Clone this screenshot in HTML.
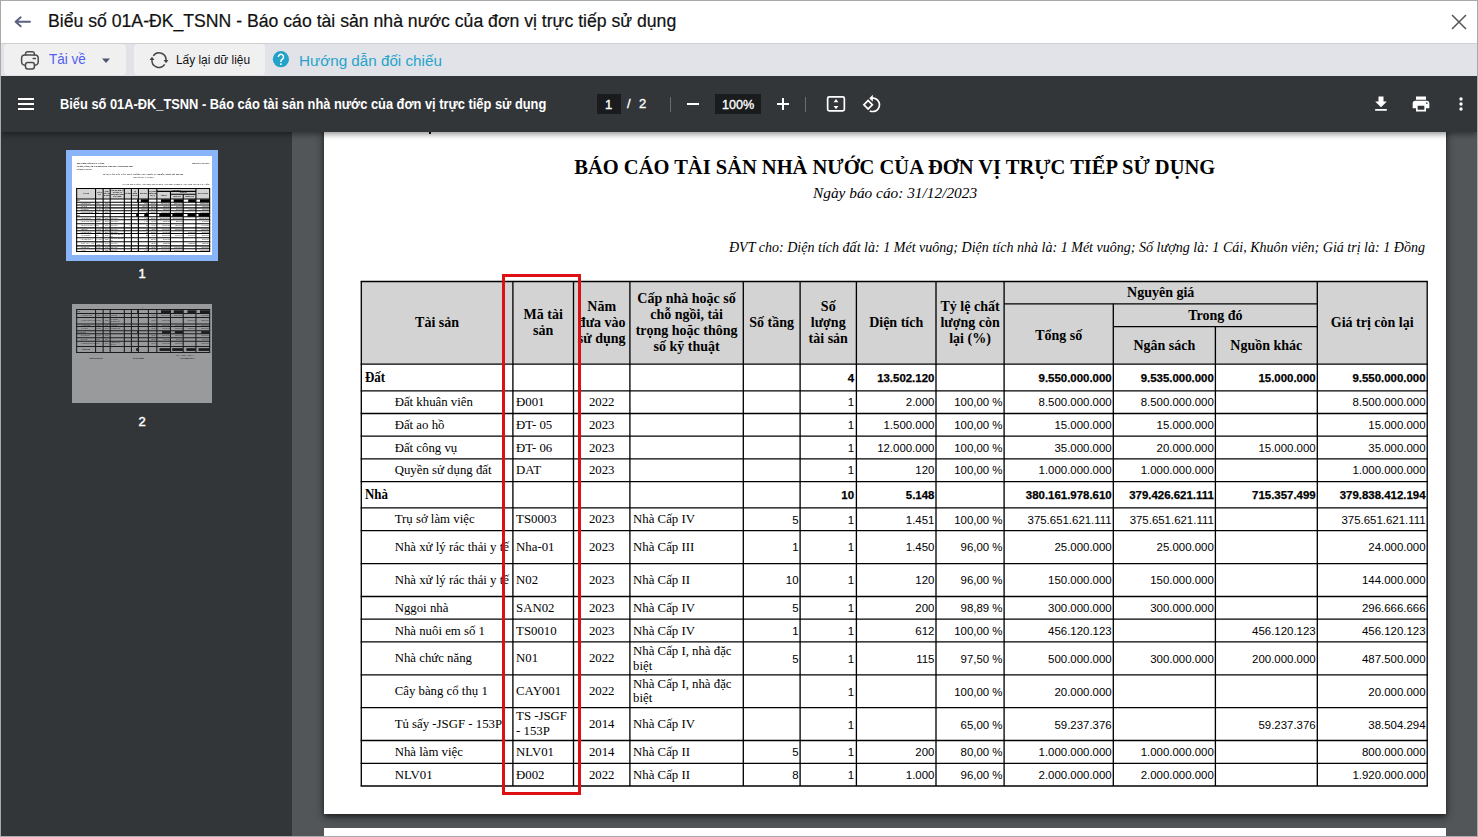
<!DOCTYPE html>
<html lang="vi">
<head>
<meta charset="utf-8">
<title>Biểu số 01A-ĐK_TSNN</title>
<style>
*{box-sizing:border-box;margin:0;padding:0}
html,body{width:1478px;height:837px;overflow:hidden;background:#fff}
body{position:relative;font-family:"Liberation Sans",sans-serif;color:#212121}
.abs{position:absolute}
/* viewer area */
#viewer{position:absolute;left:1px;top:76px;width:1476px;height:760px;background:#525659;overflow:hidden}
#side{position:absolute;left:0;top:76px;width:292px;height:760px;background:#323639}
#pg1{position:absolute;left:324px;top:20px;width:1122px;height:794px;background:#fff;box-shadow:0 2px 5px 0 rgba(0,0,0,.5),0 4px 9px 0 rgba(0,0,0,.3)}
#pg2{position:absolute;left:324px;top:828px;width:1122px;height:40px;background:#fff}
/* cells */
.c{position:absolute;display:flex;align-items:center;overflow:hidden;white-space:nowrap;font-family:"Liberation Serif",serif;font-size:12.8px;line-height:14.9px;color:#000}
.c span{display:block}
.h{justify-content:center;text-align:center;font-weight:bold;font-size:14px;line-height:15.9px;padding-top:0.8px}
.tg{font-weight:bold;padding-left:3.8px;font-size:13.7px;padding-top:1.8px}.tg span{transform:scaleX(.945);transform-origin:0 50%}
.tl{padding-left:33.4px;padding-top:0.6px}
.tm{padding-left:3.2px;padding-top:0.6px}
.tc{justify-content:center;padding-top:0.6px}
.n,.nb{justify-content:flex-end;padding-right:1.6px;font-family:"Liberation Sans",sans-serif;font-size:11.45px;padding-top:0.5px}
.nb{font-weight:bold;padding-top:1.6px;-webkit-text-stroke:.25px #000}
.hbg{position:absolute;background:#d3d3d3}
svg.grid{position:absolute;left:0;top:0;pointer-events:none}
svg.grid{stroke-width:1.33}svg.grid line{stroke:#000}
#red{position:absolute;left:502px;top:274px;width:79px;height:521px;border:3px solid #de1014}
.thumb{position:absolute;width:140px;height:99px;background:#fff;overflow:hidden}
.tp{position:absolute;left:0;top:0;width:1122px;height:794px;transform:scale(0.124777);transform-origin:0 0}
.tp .nb span{background:#000;padding:3px 0 4px 2px}
.tl1{font-size:13px;color:#fff;-webkit-text-stroke:.45px #fff}
/* top chrome */
#frame{position:absolute;left:0;top:0;width:1478px;height:837px;border:1px solid #a9a9a9;pointer-events:none;z-index:50}
#titlebar{position:absolute;left:1px;top:1px;width:1476px;height:42px;background:#fff}
#tb2{position:absolute;left:1px;top:43px;width:1476px;height:33px;background:#e2e3e9;border-top:1px solid #d0d0d3}
.btn{position:absolute;top:44px;height:31px;background:#f0f0f1;border-radius:4px}
#dark{position:absolute;left:1px;top:76px;width:1476px;height:56px;background:#323639;box-shadow:0 2px 6px rgba(0,0,0,.45)}
.t{position:absolute;white-space:nowrap;line-height:1;transform-origin:0 50%}
</style>
</head>
<body>
<div id="viewer"></div>
<div id="pg1"></div>
<div id="pg2"></div>
<div class="abs" style="left:429px;top:131px;width:2px;height:3px;background:#111"></div>

<div class="t" id="doct" style="left:574.300px;top:157.200px;font-family:'Liberation Serif',serif;font-weight:bold;font-size:20.5px;color:#000">BÁO CÁO TÀI SẢN NHÀ NƯỚC CỦA ĐƠN VỊ TRỰC TIẾP SỬ DỤNG</div>
<div class="t" id="docs" style="left:813px;top:185px;font-family:'Liberation Serif',serif;font-style:italic;font-size:15.35px;color:#000">Ngày báo cáo: 31/12/2023</div>
<div class="t" id="docd" style="right:53px;top:240.200px;font-family:'Liberation Serif',serif;font-style:italic;font-size:14.05px;color:#000">ĐVT cho: Diện tích đất là: 1 Mét vuông; Diện tích nhà là: 1 Mét vuông; Số lượng là: 1 Cái, Khuôn viên; Giá trị là: 1 Đồng</div>

<div class="hbg" style="left:361.3px;top:281.5px;width:1065.9px;height:82.7px"></div>
<div class="c h" style="left:361.3px;top:281.5px;width:151.6px;height:82.7px"><span>Tài sản</span></div>
<div class="c h" style="left:512.9px;top:281.5px;width:60.6px;height:82.7px"><span>Mã tài<br>sản</span></div>
<div class="c h" style="left:573.5px;top:281.5px;width:56.4px;height:82.7px"><span>Năm<br>đưa vào<br>sử dụng</span></div>
<div class="c h" style="left:629.9px;top:281.5px;width:113.4px;height:82.7px"><span>Cấp nhà hoặc số<br>chỗ ngồi, tải<br>trọng hoặc thông<br>số kỹ thuật</span></div>
<div class="c h" style="left:743.3px;top:281.5px;width:56.8px;height:82.7px"><span>Số tầng</span></div>
<div class="c h" style="left:800.1px;top:281.5px;width:56.3px;height:82.7px"><span>Số<br>lượng<br>tài sản</span></div>
<div class="c h" style="left:856.4px;top:281.5px;width:79.6px;height:82.7px"><span>Diện tích</span></div>
<div class="c h" style="left:936px;top:281.5px;width:68.1px;height:82.7px"><span>Tỷ lệ chất<br>lượng còn<br>lại (%)</span></div>
<div class="c h" style="left:1004.1px;top:281.5px;width:313.2px;height:22.3px"><span>Nguyên giá</span></div>
<div class="c h" style="left:1004.1px;top:305px;width:109.2px;height:60.4px"><span>Tổng số</span></div>
<div class="c h" style="left:1113.3px;top:303.8px;width:204px;height:22.8px"><span>Trong đó</span></div>
<div class="c h" style="left:1113.3px;top:326.6px;width:102.1px;height:37.6px"><span>Ngân sách</span></div>
<div class="c h" style="left:1215.4px;top:326.6px;width:101.9px;height:37.6px"><span>Nguồn khác</span></div>
<div class="c h" style="left:1317.3px;top:281.5px;width:109.9px;height:82.7px"><span>Giá trị còn lại</span></div>
<div class="c tg" style="left:361.3px;top:364.2px;width:151.6px;height:26.6px"><span>Đất</span></div>
<div class="c nb" style="left:800.1px;top:364.2px;width:55.5px;height:26.6px"><span>4</span></div>
<div class="c nb" style="left:856.4px;top:364.2px;width:79.6px;height:26.6px"><span>13.502.120</span></div>
<div class="c nb" style="left:1004.1px;top:364.2px;width:109.2px;height:26.6px"><span>9.550.000.000</span></div>
<div class="c nb" style="left:1113.3px;top:364.2px;width:102.1px;height:26.6px"><span>9.535.000.000</span></div>
<div class="c nb" style="left:1215.4px;top:364.2px;width:101.9px;height:26.6px"><span>15.000.000</span></div>
<div class="c nb" style="left:1317.3px;top:364.2px;width:109.9px;height:26.6px"><span>9.550.000.000</span></div>
<div class="c tl" style="left:361.3px;top:390.8px;width:151.6px;height:22.7px"><span>Đất khuân viên</span></div>
<div class="c tm" style="left:512.9px;top:390.8px;width:60.6px;height:22.7px"><span>Đ001</span></div>
<div class="c tc" style="left:573.5px;top:390.8px;width:56.4px;height:22.7px"><span>2022</span></div>
<div class="c n" style="left:800.1px;top:390.8px;width:55.5px;height:22.7px"><span>1</span></div>
<div class="c n" style="left:856.4px;top:390.8px;width:79.6px;height:22.7px"><span>2.000</span></div>
<div class="c n" style="left:936px;top:390.8px;width:68.1px;height:22.7px"><span>100,00 %</span></div>
<div class="c n" style="left:1004.1px;top:390.8px;width:109.2px;height:22.7px"><span>8.500.000.000</span></div>
<div class="c n" style="left:1113.3px;top:390.8px;width:102.1px;height:22.7px"><span>8.500.000.000</span></div>
<div class="c n" style="left:1317.3px;top:390.8px;width:109.9px;height:22.7px"><span>8.500.000.000</span></div>
<div class="c tl" style="left:361.3px;top:413.5px;width:151.6px;height:22.7px"><span>Đất ao hồ</span></div>
<div class="c tm" style="left:512.9px;top:413.5px;width:60.6px;height:22.7px"><span>ĐT- 05</span></div>
<div class="c tc" style="left:573.5px;top:413.5px;width:56.4px;height:22.7px"><span>2023</span></div>
<div class="c n" style="left:800.1px;top:413.5px;width:55.5px;height:22.7px"><span>1</span></div>
<div class="c n" style="left:856.4px;top:413.5px;width:79.6px;height:22.7px"><span>1.500.000</span></div>
<div class="c n" style="left:936px;top:413.5px;width:68.1px;height:22.7px"><span>100,00 %</span></div>
<div class="c n" style="left:1004.1px;top:413.5px;width:109.2px;height:22.7px"><span>15.000.000</span></div>
<div class="c n" style="left:1113.3px;top:413.5px;width:102.1px;height:22.7px"><span>15.000.000</span></div>
<div class="c n" style="left:1317.3px;top:413.5px;width:109.9px;height:22.7px"><span>15.000.000</span></div>
<div class="c tl" style="left:361.3px;top:437.2px;width:151.6px;height:22.7px"><span>Đất công vụ</span></div>
<div class="c tm" style="left:512.9px;top:437.2px;width:60.6px;height:22.7px"><span>ĐT- 06</span></div>
<div class="c tc" style="left:573.5px;top:437.2px;width:56.4px;height:22.7px"><span>2023</span></div>
<div class="c n" style="left:800.1px;top:437.2px;width:55.5px;height:22.7px"><span>1</span></div>
<div class="c n" style="left:856.4px;top:437.2px;width:79.6px;height:22.7px"><span>12.000.000</span></div>
<div class="c n" style="left:936px;top:437.2px;width:68.1px;height:22.7px"><span>100,00 %</span></div>
<div class="c n" style="left:1004.1px;top:437.2px;width:109.2px;height:22.7px"><span>35.000.000</span></div>
<div class="c n" style="left:1113.3px;top:437.2px;width:102.1px;height:22.7px"><span>20.000.000</span></div>
<div class="c n" style="left:1215.4px;top:437.2px;width:101.9px;height:22.7px"><span>15.000.000</span></div>
<div class="c n" style="left:1317.3px;top:437.2px;width:109.9px;height:22.7px"><span>35.000.000</span></div>
<div class="c tl" style="left:361.3px;top:458.9px;width:151.6px;height:22.7px"><span>Quyền sử dụng đất</span></div>
<div class="c tm" style="left:512.9px;top:458.9px;width:60.6px;height:22.7px"><span>DAT</span></div>
<div class="c tc" style="left:573.5px;top:458.9px;width:56.4px;height:22.7px"><span>2023</span></div>
<div class="c n" style="left:800.1px;top:458.9px;width:55.5px;height:22.7px"><span>1</span></div>
<div class="c n" style="left:856.4px;top:458.9px;width:79.6px;height:22.7px"><span>120</span></div>
<div class="c n" style="left:936px;top:458.9px;width:68.1px;height:22.7px"><span>100,00 %</span></div>
<div class="c n" style="left:1004.1px;top:458.9px;width:109.2px;height:22.7px"><span>1.000.000.000</span></div>
<div class="c n" style="left:1113.3px;top:458.9px;width:102.1px;height:22.7px"><span>1.000.000.000</span></div>
<div class="c n" style="left:1317.3px;top:458.9px;width:109.9px;height:22.7px"><span>1.000.000.000</span></div>
<div class="c tg" style="left:361.3px;top:481.6px;width:151.6px;height:26.3px"><span>Nhà</span></div>
<div class="c nb" style="left:800.1px;top:481.6px;width:55.5px;height:26.3px"><span>10</span></div>
<div class="c nb" style="left:856.4px;top:481.6px;width:79.6px;height:26.3px"><span>5.148</span></div>
<div class="c nb" style="left:1004.1px;top:481.6px;width:109.2px;height:26.3px"><span>380.161.978.610</span></div>
<div class="c nb" style="left:1113.3px;top:481.6px;width:102.1px;height:26.3px"><span>379.426.621.111</span></div>
<div class="c nb" style="left:1215.4px;top:481.6px;width:101.9px;height:26.3px"><span>715.357.499</span></div>
<div class="c nb" style="left:1317.3px;top:481.6px;width:109.9px;height:26.3px"><span>379.838.412.194</span></div>
<div class="c tl" style="left:361.3px;top:507.9px;width:151.6px;height:22.7px"><span>Trụ sở làm việc</span></div>
<div class="c tm" style="left:512.9px;top:507.9px;width:60.6px;height:22.7px"><span>TS0003</span></div>
<div class="c tc" style="left:573.5px;top:507.9px;width:56.4px;height:22.7px"><span>2023</span></div>
<div class="c tm" style="left:629.9px;top:507.9px;width:113.4px;height:22.7px"><span>Nhà Cấp IV</span></div>
<div class="c n" style="left:743.3px;top:508.9px;width:56.8px;height:22.7px"><span>5</span></div>
<div class="c n" style="left:800.1px;top:508.9px;width:55.5px;height:22.7px"><span>1</span></div>
<div class="c n" style="left:856.4px;top:508.9px;width:79.6px;height:22.7px"><span>1.451</span></div>
<div class="c n" style="left:936px;top:508.9px;width:68.1px;height:22.7px"><span>100,00 %</span></div>
<div class="c n" style="left:1004.1px;top:508.9px;width:109.2px;height:22.7px"><span>375.651.621.111</span></div>
<div class="c n" style="left:1113.3px;top:508.9px;width:102.1px;height:22.7px"><span>375.651.621.111</span></div>
<div class="c n" style="left:1317.3px;top:508.9px;width:109.9px;height:22.7px"><span>375.651.621.111</span></div>
<div class="c tl" style="left:361.3px;top:530.6px;width:151.6px;height:33px"><span>Nhà xử lý rác thải y tế</span></div>
<div class="c tm" style="left:512.9px;top:530.6px;width:60.6px;height:33px"><span>Nha-01</span></div>
<div class="c tc" style="left:573.5px;top:530.6px;width:56.4px;height:33px"><span>2023</span></div>
<div class="c tm" style="left:629.9px;top:530.6px;width:113.4px;height:33px"><span>Nhà Cấp III</span></div>
<div class="c n" style="left:743.3px;top:530.6px;width:56.8px;height:33px"><span>1</span></div>
<div class="c n" style="left:800.1px;top:530.6px;width:55.5px;height:33px"><span>1</span></div>
<div class="c n" style="left:856.4px;top:530.6px;width:79.6px;height:33px"><span>1.450</span></div>
<div class="c n" style="left:936px;top:530.6px;width:68.1px;height:33px"><span>96,00 %</span></div>
<div class="c n" style="left:1004.1px;top:530.6px;width:109.2px;height:33px"><span>25.000.000</span></div>
<div class="c n" style="left:1113.3px;top:530.6px;width:102.1px;height:33px"><span>25.000.000</span></div>
<div class="c n" style="left:1317.3px;top:530.6px;width:109.9px;height:33px"><span>24.000.000</span></div>
<div class="c tl" style="left:361.3px;top:563.6px;width:151.6px;height:32.9px"><span>Nhà xử lý rác thải y tế</span></div>
<div class="c tm" style="left:512.9px;top:563.6px;width:60.6px;height:32.9px"><span>N02</span></div>
<div class="c tc" style="left:573.5px;top:563.6px;width:56.4px;height:32.9px"><span>2023</span></div>
<div class="c tm" style="left:629.9px;top:563.6px;width:113.4px;height:32.9px"><span>Nhà Cấp II</span></div>
<div class="c n" style="left:743.3px;top:563.6px;width:56.8px;height:32.9px"><span>10</span></div>
<div class="c n" style="left:800.1px;top:563.6px;width:55.5px;height:32.9px"><span>1</span></div>
<div class="c n" style="left:856.4px;top:563.6px;width:79.6px;height:32.9px"><span>120</span></div>
<div class="c n" style="left:936px;top:563.6px;width:68.1px;height:32.9px"><span>96,00 %</span></div>
<div class="c n" style="left:1004.1px;top:563.6px;width:109.2px;height:32.9px"><span>150.000.000</span></div>
<div class="c n" style="left:1113.3px;top:563.6px;width:102.1px;height:32.9px"><span>150.000.000</span></div>
<div class="c n" style="left:1317.3px;top:563.6px;width:109.9px;height:32.9px"><span>144.000.000</span></div>
<div class="c tl" style="left:361.3px;top:596.5px;width:151.6px;height:22.6px"><span>Nggoi nhà</span></div>
<div class="c tm" style="left:512.9px;top:596.5px;width:60.6px;height:22.6px"><span>SAN02</span></div>
<div class="c tc" style="left:573.5px;top:596.5px;width:56.4px;height:22.6px"><span>2023</span></div>
<div class="c tm" style="left:629.9px;top:596.5px;width:113.4px;height:22.6px"><span>Nhà Cấp IV</span></div>
<div class="c n" style="left:743.3px;top:596.5px;width:56.8px;height:22.6px"><span>5</span></div>
<div class="c n" style="left:800.1px;top:596.5px;width:55.5px;height:22.6px"><span>1</span></div>
<div class="c n" style="left:856.4px;top:596.5px;width:79.6px;height:22.6px"><span>200</span></div>
<div class="c n" style="left:936px;top:596.5px;width:68.1px;height:22.6px"><span>98,89 %</span></div>
<div class="c n" style="left:1004.1px;top:596.5px;width:109.2px;height:22.6px"><span>300.000.000</span></div>
<div class="c n" style="left:1113.3px;top:596.5px;width:102.1px;height:22.6px"><span>300.000.000</span></div>
<div class="c n" style="left:1317.3px;top:596.5px;width:109.9px;height:22.6px"><span>296.666.666</span></div>
<div class="c tl" style="left:361.3px;top:620.1px;width:151.6px;height:22.7px"><span>Nhà nuôi em số 1</span></div>
<div class="c tm" style="left:512.9px;top:620.1px;width:60.6px;height:22.7px"><span>TS0010</span></div>
<div class="c tc" style="left:573.5px;top:620.1px;width:56.4px;height:22.7px"><span>2023</span></div>
<div class="c tm" style="left:629.9px;top:620.1px;width:113.4px;height:22.7px"><span>Nhà Cấp IV</span></div>
<div class="c n" style="left:743.3px;top:620.1px;width:56.8px;height:22.7px"><span>1</span></div>
<div class="c n" style="left:800.1px;top:620.1px;width:55.5px;height:22.7px"><span>1</span></div>
<div class="c n" style="left:856.4px;top:620.1px;width:79.6px;height:22.7px"><span>612</span></div>
<div class="c n" style="left:936px;top:620.1px;width:68.1px;height:22.7px"><span>100,00 %</span></div>
<div class="c n" style="left:1004.1px;top:620.1px;width:109.2px;height:22.7px"><span>456.120.123</span></div>
<div class="c n" style="left:1215.4px;top:620.1px;width:101.9px;height:22.7px"><span>456.120.123</span></div>
<div class="c n" style="left:1317.3px;top:620.1px;width:109.9px;height:22.7px"><span>456.120.123</span></div>
<div class="c tl" style="left:361.3px;top:641.8px;width:151.6px;height:33px"><span>Nhà chức năng</span></div>
<div class="c tm" style="left:512.9px;top:641.8px;width:60.6px;height:33px"><span>N01</span></div>
<div class="c tc" style="left:573.5px;top:641.8px;width:56.4px;height:33px"><span>2022</span></div>
<div class="c tm" style="left:629.9px;top:641.8px;width:113.4px;height:33px"><span>Nhà Cấp I, nhà đặc<br>biệt</span></div>
<div class="c n" style="left:743.3px;top:642.8px;width:56.8px;height:33px"><span>5</span></div>
<div class="c n" style="left:800.1px;top:642.8px;width:55.5px;height:33px"><span>1</span></div>
<div class="c n" style="left:856.4px;top:642.8px;width:79.6px;height:33px"><span>115</span></div>
<div class="c n" style="left:936px;top:642.8px;width:68.1px;height:33px"><span>97,50 %</span></div>
<div class="c n" style="left:1004.1px;top:642.8px;width:109.2px;height:33px"><span>500.000.000</span></div>
<div class="c n" style="left:1113.3px;top:642.8px;width:102.1px;height:33px"><span>300.000.000</span></div>
<div class="c n" style="left:1215.4px;top:642.8px;width:101.9px;height:33px"><span>200.000.000</span></div>
<div class="c n" style="left:1317.3px;top:642.8px;width:109.9px;height:33px"><span>487.500.000</span></div>
<div class="c tl" style="left:361.3px;top:674.8px;width:151.6px;height:32.8px"><span>Cây bàng cổ thụ 1</span></div>
<div class="c tm" style="left:512.9px;top:674.8px;width:60.6px;height:32.8px"><span>CAY001</span></div>
<div class="c tc" style="left:573.5px;top:674.8px;width:56.4px;height:32.8px"><span>2022</span></div>
<div class="c tm" style="left:629.9px;top:674.8px;width:113.4px;height:32.8px"><span>Nhà Cấp I, nhà đặc<br>biệt</span></div>
<div class="c n" style="left:800.1px;top:675.8px;width:55.5px;height:32.8px"><span>1</span></div>
<div class="c n" style="left:936px;top:675.8px;width:68.1px;height:32.8px"><span>100,00 %</span></div>
<div class="c n" style="left:1004.1px;top:675.8px;width:109.2px;height:32.8px"><span>20.000.000</span></div>
<div class="c n" style="left:1317.3px;top:675.8px;width:109.9px;height:32.8px"><span>20.000.000</span></div>
<div class="c tl" style="left:361.3px;top:707.6px;width:151.6px;height:32.9px"><span>Tủ sấy -JSGF - 153P</span></div>
<div class="c tm" style="left:512.9px;top:707.6px;width:60.6px;height:32.9px"><span>TS -JSGF<br>- 153P</span></div>
<div class="c tc" style="left:573.5px;top:707.6px;width:56.4px;height:32.9px"><span>2014</span></div>
<div class="c tm" style="left:629.9px;top:707.6px;width:113.4px;height:32.9px"><span>Nhà Cấp IV</span></div>
<div class="c n" style="left:800.1px;top:708.6px;width:55.5px;height:32.9px"><span>1</span></div>
<div class="c n" style="left:936px;top:708.6px;width:68.1px;height:32.9px"><span>65,00 %</span></div>
<div class="c n" style="left:1004.1px;top:708.6px;width:109.2px;height:32.9px"><span>59.237.376</span></div>
<div class="c n" style="left:1215.4px;top:708.6px;width:101.9px;height:32.9px"><span>59.237.376</span></div>
<div class="c n" style="left:1317.3px;top:708.6px;width:109.9px;height:32.9px"><span>38.504.294</span></div>
<div class="c tl" style="left:361.3px;top:740.5px;width:151.6px;height:22.8px"><span>Nhà làm việc</span></div>
<div class="c tm" style="left:512.9px;top:740.5px;width:60.6px;height:22.8px"><span>NLV01</span></div>
<div class="c tc" style="left:573.5px;top:740.5px;width:56.4px;height:22.8px"><span>2014</span></div>
<div class="c tm" style="left:629.9px;top:740.5px;width:113.4px;height:22.8px"><span>Nhà Cấp II</span></div>
<div class="c n" style="left:743.3px;top:740.5px;width:56.8px;height:22.8px"><span>5</span></div>
<div class="c n" style="left:800.1px;top:740.5px;width:55.5px;height:22.8px"><span>1</span></div>
<div class="c n" style="left:856.4px;top:740.5px;width:79.6px;height:22.8px"><span>200</span></div>
<div class="c n" style="left:936px;top:740.5px;width:68.1px;height:22.8px"><span>80,00 %</span></div>
<div class="c n" style="left:1004.1px;top:740.5px;width:109.2px;height:22.8px"><span>1.000.000.000</span></div>
<div class="c n" style="left:1113.3px;top:740.5px;width:102.1px;height:22.8px"><span>1.000.000.000</span></div>
<div class="c n" style="left:1317.3px;top:740.5px;width:109.9px;height:22.8px"><span>800.000.000</span></div>
<div class="c tl" style="left:361.3px;top:764.3px;width:151.6px;height:22.7px"><span>NLV01</span></div>
<div class="c tm" style="left:512.9px;top:764.3px;width:60.6px;height:22.7px"><span>Đ002</span></div>
<div class="c tc" style="left:573.5px;top:764.3px;width:56.4px;height:22.7px"><span>2022</span></div>
<div class="c tm" style="left:629.9px;top:764.3px;width:113.4px;height:22.7px"><span>Nhà Cấp II</span></div>
<div class="c n" style="left:743.3px;top:764.3px;width:56.8px;height:22.7px"><span>8</span></div>
<div class="c n" style="left:800.1px;top:764.3px;width:55.5px;height:22.7px"><span>1</span></div>
<div class="c n" style="left:856.4px;top:764.3px;width:79.6px;height:22.7px"><span>1.000</span></div>
<div class="c n" style="left:936px;top:764.3px;width:68.1px;height:22.7px"><span>96,00 %</span></div>
<div class="c n" style="left:1004.1px;top:764.3px;width:109.2px;height:22.7px"><span>2.000.000.000</span></div>
<div class="c n" style="left:1113.3px;top:764.3px;width:102.1px;height:22.7px"><span>2.000.000.000</span></div>
<div class="c n" style="left:1317.3px;top:764.3px;width:109.9px;height:22.7px"><span>1.920.000.000</span></div>
<svg class="grid" width="1478" height="900" viewBox="0 0 1478 900" style="stroke-width:1.33"><line x1="360.63" y1="281.5" x2="1427.87" y2="281.5"/><line x1="1004.1" y1="303.8" x2="1317.3" y2="303.8"/><line x1="1113.3" y1="326.6" x2="1317.3" y2="326.6"/><line x1="360.63" y1="364.2" x2="1427.87" y2="364.2"/><line x1="360.63" y1="390.8" x2="1427.87" y2="390.8"/><line x1="360.63" y1="413.5" x2="1427.87" y2="413.5"/><line x1="360.63" y1="436.2" x2="1427.87" y2="436.2"/><line x1="360.63" y1="458.9" x2="1427.87" y2="458.9"/><line x1="360.63" y1="481.6" x2="1427.87" y2="481.6"/><line x1="360.63" y1="507.9" x2="1427.87" y2="507.9"/><line x1="360.63" y1="530.6" x2="1427.87" y2="530.6"/><line x1="360.63" y1="563.6" x2="1427.87" y2="563.6"/><line x1="360.63" y1="596.5" x2="1427.87" y2="596.5"/><line x1="360.63" y1="619.1" x2="1427.87" y2="619.1"/><line x1="360.63" y1="641.8" x2="1427.87" y2="641.8"/><line x1="360.63" y1="674.8" x2="1427.87" y2="674.8"/><line x1="360.63" y1="707.6" x2="1427.87" y2="707.6"/><line x1="360.63" y1="740.5" x2="1427.87" y2="740.5"/><line x1="360.63" y1="763.3" x2="1427.87" y2="763.3"/><line x1="360.63" y1="786" x2="1427.87" y2="786"/><line x1="361.3" y1="281.5" x2="361.3" y2="786"/><line x1="512.9" y1="281.5" x2="512.9" y2="786"/><line x1="573.5" y1="281.5" x2="573.5" y2="786"/><line x1="629.9" y1="281.5" x2="629.9" y2="786"/><line x1="743.3" y1="281.5" x2="743.3" y2="786"/><line x1="800.1" y1="281.5" x2="800.1" y2="786"/><line x1="856.4" y1="281.5" x2="856.4" y2="786"/><line x1="936" y1="281.5" x2="936" y2="786"/><line x1="1004.1" y1="281.5" x2="1004.1" y2="786"/><line x1="1113.3" y1="303.8" x2="1113.3" y2="786"/><line x1="1215.4" y1="326.6" x2="1215.4" y2="786"/><line x1="1317.3" y1="281.5" x2="1317.3" y2="786"/><line x1="1427.2" y1="281.5" x2="1427.2" y2="786"/></svg>
<div id="red"></div>

<div id="side"></div>
<div class="abs" style="left:66px;top:150px;width:152px;height:111px;background:#8ab4f8"></div><div class="thumb" style="left:72px;top:156px"><div class="tp"><div class="t" style="left:251px;top:136.700px;font-family:'Liberation Serif',serif;font-weight:bold;font-size:20.500px;color:#000">BÁO CÁO TÀI SẢN NHÀ NƯỚC CỦA ĐƠN VỊ TRỰC TIẾP SỬ DỤNG</div><div class="t" style="left:489px;top:164.700px;font-family:'Liberation Serif',serif;font-style:italic;font-size:15.350px;color:#000">Ngày báo cáo: 31/12/2023</div><div class="t" style="right:21px;top:219.700px;font-family:'Liberation Serif',serif;font-style:italic;font-size:14.050px;color:#000">ĐVT cho: Diện tích đất là: 1 Mét vuông; Diện tích nhà là: 1 Mét vuông; Số lượng là: 1 Cái, Khuôn viên; Giá trị là: 1 Đồng</div><div class="t" style="left:38px;top:52px;font-family:'Liberation Serif',serif;font-size:14px;line-height:22px;color:#000;font-weight:bold">Đơn vị quản lý cấp trên: Sở Y tế tỉnh<br>Cơ quan, tổ chức, đơn vị sử dụng tài sản: Trung tâm Y tế huyện Bình Minh<br>Mã đơn vị: 1053498</div><div class="t" style="right:21px;top:52px;font-family:'Liberation Serif',serif;font-size:14px;color:#000;font-weight:bold">Mẫu số 01A-ĐK/TSNN</div>
<div class="hbg" style="left:37.3px;top:261.2px;width:1065.9px;height:82.7px"></div>
<div class="c h" style="left:37.3px;top:261.2px;width:151.6px;height:82.7px"><span>Tài sản</span></div>
<div class="c h" style="left:188.9px;top:261.2px;width:60.6px;height:82.7px"><span>Mã tài<br>sản</span></div>
<div class="c h" style="left:249.5px;top:261.2px;width:56.4px;height:82.7px"><span>Năm<br>đưa vào<br>sử dụng</span></div>
<div class="c h" style="left:305.9px;top:261.2px;width:113.4px;height:82.7px"><span>Cấp nhà hoặc số<br>chỗ ngồi, tải<br>trọng hoặc thông<br>số kỹ thuật</span></div>
<div class="c h" style="left:419.3px;top:261.2px;width:56.8px;height:82.7px"><span>Số tầng</span></div>
<div class="c h" style="left:476.1px;top:261.2px;width:56.3px;height:82.7px"><span>Số<br>lượng<br>tài sản</span></div>
<div class="c h" style="left:532.4px;top:261.2px;width:79.6px;height:82.7px"><span>Diện tích</span></div>
<div class="c h" style="left:612px;top:261.2px;width:68.1px;height:82.7px"><span>Tỷ lệ chất<br>lượng còn<br>lại (%)</span></div>
<div class="c h" style="left:680.1px;top:261.2px;width:313.2px;height:22.3px"><span>Nguyên giá</span></div>
<div class="c h" style="left:680.1px;top:284.7px;width:109.2px;height:60.4px"><span>Tổng số</span></div>
<div class="c h" style="left:789.3px;top:283.5px;width:204px;height:22.8px"><span>Trong đó</span></div>
<div class="c h" style="left:789.3px;top:306.3px;width:102.1px;height:37.6px"><span>Ngân sách</span></div>
<div class="c h" style="left:891.4px;top:306.3px;width:101.9px;height:37.6px"><span>Nguồn khác</span></div>
<div class="c h" style="left:993.3px;top:261.2px;width:109.9px;height:82.7px"><span>Giá trị còn lại</span></div>
<div class="c tg" style="left:37.3px;top:343.9px;width:151.6px;height:26.6px"><span>Đất</span></div>
<div class="c nb" style="left:476.1px;top:343.9px;width:55.5px;height:26.6px"><span>4</span></div>
<div class="c nb" style="left:532.4px;top:343.9px;width:79.6px;height:26.6px"><span>13.502.120</span></div>
<div class="c nb" style="left:680.1px;top:343.9px;width:109.2px;height:26.6px"><span>9.550.000.000</span></div>
<div class="c nb" style="left:789.3px;top:343.9px;width:102.1px;height:26.6px"><span>9.535.000.000</span></div>
<div class="c nb" style="left:891.4px;top:343.9px;width:101.9px;height:26.6px"><span>15.000.000</span></div>
<div class="c nb" style="left:993.3px;top:343.9px;width:109.9px;height:26.6px"><span>9.550.000.000</span></div>
<div class="c tl" style="left:37.3px;top:370.5px;width:151.6px;height:22.7px"><span>Đất khuân viên</span></div>
<div class="c tm" style="left:188.9px;top:370.5px;width:60.6px;height:22.7px"><span>Đ001</span></div>
<div class="c tc" style="left:249.5px;top:370.5px;width:56.4px;height:22.7px"><span>2022</span></div>
<div class="c n" style="left:476.1px;top:370.5px;width:55.5px;height:22.7px"><span>1</span></div>
<div class="c n" style="left:532.4px;top:370.5px;width:79.6px;height:22.7px"><span>2.000</span></div>
<div class="c n" style="left:612px;top:370.5px;width:68.1px;height:22.7px"><span>100,00 %</span></div>
<div class="c n" style="left:680.1px;top:370.5px;width:109.2px;height:22.7px"><span>8.500.000.000</span></div>
<div class="c n" style="left:789.3px;top:370.5px;width:102.1px;height:22.7px"><span>8.500.000.000</span></div>
<div class="c n" style="left:993.3px;top:370.5px;width:109.9px;height:22.7px"><span>8.500.000.000</span></div>
<div class="c tl" style="left:37.3px;top:393.2px;width:151.6px;height:22.7px"><span>Đất ao hồ</span></div>
<div class="c tm" style="left:188.9px;top:393.2px;width:60.6px;height:22.7px"><span>ĐT- 05</span></div>
<div class="c tc" style="left:249.5px;top:393.2px;width:56.4px;height:22.7px"><span>2023</span></div>
<div class="c n" style="left:476.1px;top:393.2px;width:55.5px;height:22.7px"><span>1</span></div>
<div class="c n" style="left:532.4px;top:393.2px;width:79.6px;height:22.7px"><span>1.500.000</span></div>
<div class="c n" style="left:612px;top:393.2px;width:68.1px;height:22.7px"><span>100,00 %</span></div>
<div class="c n" style="left:680.1px;top:393.2px;width:109.2px;height:22.7px"><span>15.000.000</span></div>
<div class="c n" style="left:789.3px;top:393.2px;width:102.1px;height:22.7px"><span>15.000.000</span></div>
<div class="c n" style="left:993.3px;top:393.2px;width:109.9px;height:22.7px"><span>15.000.000</span></div>
<div class="c tl" style="left:37.3px;top:416.9px;width:151.6px;height:22.7px"><span>Đất công vụ</span></div>
<div class="c tm" style="left:188.9px;top:416.9px;width:60.6px;height:22.7px"><span>ĐT- 06</span></div>
<div class="c tc" style="left:249.5px;top:416.9px;width:56.4px;height:22.7px"><span>2023</span></div>
<div class="c n" style="left:476.1px;top:416.9px;width:55.5px;height:22.7px"><span>1</span></div>
<div class="c n" style="left:532.4px;top:416.9px;width:79.6px;height:22.7px"><span>12.000.000</span></div>
<div class="c n" style="left:612px;top:416.9px;width:68.1px;height:22.7px"><span>100,00 %</span></div>
<div class="c n" style="left:680.1px;top:416.9px;width:109.2px;height:22.7px"><span>35.000.000</span></div>
<div class="c n" style="left:789.3px;top:416.9px;width:102.1px;height:22.7px"><span>20.000.000</span></div>
<div class="c n" style="left:891.4px;top:416.9px;width:101.9px;height:22.7px"><span>15.000.000</span></div>
<div class="c n" style="left:993.3px;top:416.9px;width:109.9px;height:22.7px"><span>35.000.000</span></div>
<div class="c tl" style="left:37.3px;top:438.6px;width:151.6px;height:22.7px"><span>Quyền sử dụng đất</span></div>
<div class="c tm" style="left:188.9px;top:438.6px;width:60.6px;height:22.7px"><span>DAT</span></div>
<div class="c tc" style="left:249.5px;top:438.6px;width:56.4px;height:22.7px"><span>2023</span></div>
<div class="c n" style="left:476.1px;top:438.6px;width:55.5px;height:22.7px"><span>1</span></div>
<div class="c n" style="left:532.4px;top:438.6px;width:79.6px;height:22.7px"><span>120</span></div>
<div class="c n" style="left:612px;top:438.6px;width:68.1px;height:22.7px"><span>100,00 %</span></div>
<div class="c n" style="left:680.1px;top:438.6px;width:109.2px;height:22.7px"><span>1.000.000.000</span></div>
<div class="c n" style="left:789.3px;top:438.6px;width:102.1px;height:22.7px"><span>1.000.000.000</span></div>
<div class="c n" style="left:993.3px;top:438.6px;width:109.9px;height:22.7px"><span>1.000.000.000</span></div>
<div class="c tg" style="left:37.3px;top:461.3px;width:151.6px;height:26.3px"><span>Nhà</span></div>
<div class="c nb" style="left:476.1px;top:461.3px;width:55.5px;height:26.3px"><span>10</span></div>
<div class="c nb" style="left:532.4px;top:461.3px;width:79.6px;height:26.3px"><span>5.148</span></div>
<div class="c nb" style="left:680.1px;top:461.3px;width:109.2px;height:26.3px"><span>380.161.978.610</span></div>
<div class="c nb" style="left:789.3px;top:461.3px;width:102.1px;height:26.3px"><span>379.426.621.111</span></div>
<div class="c nb" style="left:891.4px;top:461.3px;width:101.9px;height:26.3px"><span>715.357.499</span></div>
<div class="c nb" style="left:993.3px;top:461.3px;width:109.9px;height:26.3px"><span>379.838.412.194</span></div>
<div class="c tl" style="left:37.3px;top:487.6px;width:151.6px;height:22.7px"><span>Trụ sở làm việc</span></div>
<div class="c tm" style="left:188.9px;top:487.6px;width:60.6px;height:22.7px"><span>TS0003</span></div>
<div class="c tc" style="left:249.5px;top:487.6px;width:56.4px;height:22.7px"><span>2023</span></div>
<div class="c tm" style="left:305.9px;top:487.6px;width:113.4px;height:22.7px"><span>Nhà Cấp IV</span></div>
<div class="c n" style="left:419.3px;top:488.6px;width:56.8px;height:22.7px"><span>5</span></div>
<div class="c n" style="left:476.1px;top:488.6px;width:55.5px;height:22.7px"><span>1</span></div>
<div class="c n" style="left:532.4px;top:488.6px;width:79.6px;height:22.7px"><span>1.451</span></div>
<div class="c n" style="left:612px;top:488.6px;width:68.1px;height:22.7px"><span>100,00 %</span></div>
<div class="c n" style="left:680.1px;top:488.6px;width:109.2px;height:22.7px"><span>375.651.621.111</span></div>
<div class="c n" style="left:789.3px;top:488.6px;width:102.1px;height:22.7px"><span>375.651.621.111</span></div>
<div class="c n" style="left:993.3px;top:488.6px;width:109.9px;height:22.7px"><span>375.651.621.111</span></div>
<div class="c tl" style="left:37.3px;top:510.3px;width:151.6px;height:33px"><span>Nhà xử lý rác thải y tế</span></div>
<div class="c tm" style="left:188.9px;top:510.3px;width:60.6px;height:33px"><span>Nha-01</span></div>
<div class="c tc" style="left:249.5px;top:510.3px;width:56.4px;height:33px"><span>2023</span></div>
<div class="c tm" style="left:305.9px;top:510.3px;width:113.4px;height:33px"><span>Nhà Cấp III</span></div>
<div class="c n" style="left:419.3px;top:510.3px;width:56.8px;height:33px"><span>1</span></div>
<div class="c n" style="left:476.1px;top:510.3px;width:55.5px;height:33px"><span>1</span></div>
<div class="c n" style="left:532.4px;top:510.3px;width:79.6px;height:33px"><span>1.450</span></div>
<div class="c n" style="left:612px;top:510.3px;width:68.1px;height:33px"><span>96,00 %</span></div>
<div class="c n" style="left:680.1px;top:510.3px;width:109.2px;height:33px"><span>25.000.000</span></div>
<div class="c n" style="left:789.3px;top:510.3px;width:102.1px;height:33px"><span>25.000.000</span></div>
<div class="c n" style="left:993.3px;top:510.3px;width:109.9px;height:33px"><span>24.000.000</span></div>
<div class="c tl" style="left:37.3px;top:543.3px;width:151.6px;height:32.9px"><span>Nhà xử lý rác thải y tế</span></div>
<div class="c tm" style="left:188.9px;top:543.3px;width:60.6px;height:32.9px"><span>N02</span></div>
<div class="c tc" style="left:249.5px;top:543.3px;width:56.4px;height:32.9px"><span>2023</span></div>
<div class="c tm" style="left:305.9px;top:543.3px;width:113.4px;height:32.9px"><span>Nhà Cấp II</span></div>
<div class="c n" style="left:419.3px;top:543.3px;width:56.8px;height:32.9px"><span>10</span></div>
<div class="c n" style="left:476.1px;top:543.3px;width:55.5px;height:32.9px"><span>1</span></div>
<div class="c n" style="left:532.4px;top:543.3px;width:79.6px;height:32.9px"><span>120</span></div>
<div class="c n" style="left:612px;top:543.3px;width:68.1px;height:32.9px"><span>96,00 %</span></div>
<div class="c n" style="left:680.1px;top:543.3px;width:109.2px;height:32.9px"><span>150.000.000</span></div>
<div class="c n" style="left:789.3px;top:543.3px;width:102.1px;height:32.9px"><span>150.000.000</span></div>
<div class="c n" style="left:993.3px;top:543.3px;width:109.9px;height:32.9px"><span>144.000.000</span></div>
<div class="c tl" style="left:37.3px;top:576.2px;width:151.6px;height:22.6px"><span>Nggoi nhà</span></div>
<div class="c tm" style="left:188.9px;top:576.2px;width:60.6px;height:22.6px"><span>SAN02</span></div>
<div class="c tc" style="left:249.5px;top:576.2px;width:56.4px;height:22.6px"><span>2023</span></div>
<div class="c tm" style="left:305.9px;top:576.2px;width:113.4px;height:22.6px"><span>Nhà Cấp IV</span></div>
<div class="c n" style="left:419.3px;top:576.2px;width:56.8px;height:22.6px"><span>5</span></div>
<div class="c n" style="left:476.1px;top:576.2px;width:55.5px;height:22.6px"><span>1</span></div>
<div class="c n" style="left:532.4px;top:576.2px;width:79.6px;height:22.6px"><span>200</span></div>
<div class="c n" style="left:612px;top:576.2px;width:68.1px;height:22.6px"><span>98,89 %</span></div>
<div class="c n" style="left:680.1px;top:576.2px;width:109.2px;height:22.6px"><span>300.000.000</span></div>
<div class="c n" style="left:789.3px;top:576.2px;width:102.1px;height:22.6px"><span>300.000.000</span></div>
<div class="c n" style="left:993.3px;top:576.2px;width:109.9px;height:22.6px"><span>296.666.666</span></div>
<div class="c tl" style="left:37.3px;top:599.8px;width:151.6px;height:22.7px"><span>Nhà nuôi em số 1</span></div>
<div class="c tm" style="left:188.9px;top:599.8px;width:60.6px;height:22.7px"><span>TS0010</span></div>
<div class="c tc" style="left:249.5px;top:599.8px;width:56.4px;height:22.7px"><span>2023</span></div>
<div class="c tm" style="left:305.9px;top:599.8px;width:113.4px;height:22.7px"><span>Nhà Cấp IV</span></div>
<div class="c n" style="left:419.3px;top:599.8px;width:56.8px;height:22.7px"><span>1</span></div>
<div class="c n" style="left:476.1px;top:599.8px;width:55.5px;height:22.7px"><span>1</span></div>
<div class="c n" style="left:532.4px;top:599.8px;width:79.6px;height:22.7px"><span>612</span></div>
<div class="c n" style="left:612px;top:599.8px;width:68.1px;height:22.7px"><span>100,00 %</span></div>
<div class="c n" style="left:680.1px;top:599.8px;width:109.2px;height:22.7px"><span>456.120.123</span></div>
<div class="c n" style="left:891.4px;top:599.8px;width:101.9px;height:22.7px"><span>456.120.123</span></div>
<div class="c n" style="left:993.3px;top:599.8px;width:109.9px;height:22.7px"><span>456.120.123</span></div>
<div class="c tl" style="left:37.3px;top:621.5px;width:151.6px;height:33px"><span>Nhà chức năng</span></div>
<div class="c tm" style="left:188.9px;top:621.5px;width:60.6px;height:33px"><span>N01</span></div>
<div class="c tc" style="left:249.5px;top:621.5px;width:56.4px;height:33px"><span>2022</span></div>
<div class="c tm" style="left:305.9px;top:621.5px;width:113.4px;height:33px"><span>Nhà Cấp I, nhà đặc<br>biệt</span></div>
<div class="c n" style="left:419.3px;top:622.5px;width:56.8px;height:33px"><span>5</span></div>
<div class="c n" style="left:476.1px;top:622.5px;width:55.5px;height:33px"><span>1</span></div>
<div class="c n" style="left:532.4px;top:622.5px;width:79.6px;height:33px"><span>115</span></div>
<div class="c n" style="left:612px;top:622.5px;width:68.1px;height:33px"><span>97,50 %</span></div>
<div class="c n" style="left:680.1px;top:622.5px;width:109.2px;height:33px"><span>500.000.000</span></div>
<div class="c n" style="left:789.3px;top:622.5px;width:102.1px;height:33px"><span>300.000.000</span></div>
<div class="c n" style="left:891.4px;top:622.5px;width:101.9px;height:33px"><span>200.000.000</span></div>
<div class="c n" style="left:993.3px;top:622.5px;width:109.9px;height:33px"><span>487.500.000</span></div>
<div class="c tl" style="left:37.3px;top:654.5px;width:151.6px;height:32.8px"><span>Cây bàng cổ thụ 1</span></div>
<div class="c tm" style="left:188.9px;top:654.5px;width:60.6px;height:32.8px"><span>CAY001</span></div>
<div class="c tc" style="left:249.5px;top:654.5px;width:56.4px;height:32.8px"><span>2022</span></div>
<div class="c tm" style="left:305.9px;top:654.5px;width:113.4px;height:32.8px"><span>Nhà Cấp I, nhà đặc<br>biệt</span></div>
<div class="c n" style="left:476.1px;top:655.5px;width:55.5px;height:32.8px"><span>1</span></div>
<div class="c n" style="left:612px;top:655.5px;width:68.1px;height:32.8px"><span>100,00 %</span></div>
<div class="c n" style="left:680.1px;top:655.5px;width:109.2px;height:32.8px"><span>20.000.000</span></div>
<div class="c n" style="left:993.3px;top:655.5px;width:109.9px;height:32.8px"><span>20.000.000</span></div>
<div class="c tl" style="left:37.3px;top:687.3px;width:151.6px;height:32.9px"><span>Tủ sấy -JSGF - 153P</span></div>
<div class="c tm" style="left:188.9px;top:687.3px;width:60.6px;height:32.9px"><span>TS -JSGF<br>- 153P</span></div>
<div class="c tc" style="left:249.5px;top:687.3px;width:56.4px;height:32.9px"><span>2014</span></div>
<div class="c tm" style="left:305.9px;top:687.3px;width:113.4px;height:32.9px"><span>Nhà Cấp IV</span></div>
<div class="c n" style="left:476.1px;top:688.3px;width:55.5px;height:32.9px"><span>1</span></div>
<div class="c n" style="left:612px;top:688.3px;width:68.1px;height:32.9px"><span>65,00 %</span></div>
<div class="c n" style="left:680.1px;top:688.3px;width:109.2px;height:32.9px"><span>59.237.376</span></div>
<div class="c n" style="left:891.4px;top:688.3px;width:101.9px;height:32.9px"><span>59.237.376</span></div>
<div class="c n" style="left:993.3px;top:688.3px;width:109.9px;height:32.9px"><span>38.504.294</span></div>
<div class="c tl" style="left:37.3px;top:720.2px;width:151.6px;height:22.8px"><span>Nhà làm việc</span></div>
<div class="c tm" style="left:188.9px;top:720.2px;width:60.6px;height:22.8px"><span>NLV01</span></div>
<div class="c tc" style="left:249.5px;top:720.2px;width:56.4px;height:22.8px"><span>2014</span></div>
<div class="c tm" style="left:305.9px;top:720.2px;width:113.4px;height:22.8px"><span>Nhà Cấp II</span></div>
<div class="c n" style="left:419.3px;top:720.2px;width:56.8px;height:22.8px"><span>5</span></div>
<div class="c n" style="left:476.1px;top:720.2px;width:55.5px;height:22.8px"><span>1</span></div>
<div class="c n" style="left:532.4px;top:720.2px;width:79.6px;height:22.8px"><span>200</span></div>
<div class="c n" style="left:612px;top:720.2px;width:68.1px;height:22.8px"><span>80,00 %</span></div>
<div class="c n" style="left:680.1px;top:720.2px;width:109.2px;height:22.8px"><span>1.000.000.000</span></div>
<div class="c n" style="left:789.3px;top:720.2px;width:102.1px;height:22.8px"><span>1.000.000.000</span></div>
<div class="c n" style="left:993.3px;top:720.2px;width:109.9px;height:22.8px"><span>800.000.000</span></div>
<div class="c tl" style="left:37.3px;top:744px;width:151.6px;height:22.7px"><span>NLV01</span></div>
<div class="c tm" style="left:188.9px;top:744px;width:60.6px;height:22.7px"><span>Đ002</span></div>
<div class="c tc" style="left:249.5px;top:744px;width:56.4px;height:22.7px"><span>2022</span></div>
<div class="c tm" style="left:305.9px;top:744px;width:113.4px;height:22.7px"><span>Nhà Cấp II</span></div>
<div class="c n" style="left:419.3px;top:744px;width:56.8px;height:22.7px"><span>8</span></div>
<div class="c n" style="left:476.1px;top:744px;width:55.5px;height:22.7px"><span>1</span></div>
<div class="c n" style="left:532.4px;top:744px;width:79.6px;height:22.7px"><span>1.000</span></div>
<div class="c n" style="left:612px;top:744px;width:68.1px;height:22.7px"><span>96,00 %</span></div>
<div class="c n" style="left:680.1px;top:744px;width:109.2px;height:22.7px"><span>2.000.000.000</span></div>
<div class="c n" style="left:789.3px;top:744px;width:102.1px;height:22.7px"><span>2.000.000.000</span></div>
<div class="c n" style="left:993.3px;top:744px;width:109.9px;height:22.7px"><span>1.920.000.000</span></div>
<svg class="grid" width="1478" height="900" viewBox="0 0 1478 900" style="stroke-width:8.5"><line x1="33.05" y1="261.2" x2="1107.45" y2="261.2"/><line x1="680.1" y1="283.5" x2="993.3" y2="283.5"/><line x1="789.3" y1="306.3" x2="993.3" y2="306.3"/><line x1="33.05" y1="343.9" x2="1107.45" y2="343.9"/><line x1="33.05" y1="370.5" x2="1107.45" y2="370.5"/><line x1="33.05" y1="393.2" x2="1107.45" y2="393.2"/><line x1="33.05" y1="415.9" x2="1107.45" y2="415.9"/><line x1="33.05" y1="438.6" x2="1107.45" y2="438.6"/><line x1="33.05" y1="461.3" x2="1107.45" y2="461.3"/><line x1="33.05" y1="487.6" x2="1107.45" y2="487.6"/><line x1="33.05" y1="510.3" x2="1107.45" y2="510.3"/><line x1="33.05" y1="543.3" x2="1107.45" y2="543.3"/><line x1="33.05" y1="576.2" x2="1107.45" y2="576.2"/><line x1="33.05" y1="598.8" x2="1107.45" y2="598.8"/><line x1="33.05" y1="621.5" x2="1107.45" y2="621.5"/><line x1="33.05" y1="654.5" x2="1107.45" y2="654.5"/><line x1="33.05" y1="687.3" x2="1107.45" y2="687.3"/><line x1="33.05" y1="720.2" x2="1107.45" y2="720.2"/><line x1="33.05" y1="743" x2="1107.45" y2="743"/><line x1="33.05" y1="765.7" x2="1107.45" y2="765.7"/><line x1="37.3" y1="261.2" x2="37.3" y2="765.7"/><line x1="188.9" y1="261.2" x2="188.9" y2="765.7"/><line x1="249.5" y1="261.2" x2="249.5" y2="765.7"/><line x1="305.9" y1="261.2" x2="305.9" y2="765.7"/><line x1="419.3" y1="261.2" x2="419.3" y2="765.7"/><line x1="476.1" y1="261.2" x2="476.1" y2="765.7"/><line x1="532.4" y1="261.2" x2="532.4" y2="765.7"/><line x1="612" y1="261.2" x2="612" y2="765.7"/><line x1="680.1" y1="261.2" x2="680.1" y2="765.7"/><line x1="789.3" y1="283.5" x2="789.3" y2="765.7"/><line x1="891.4" y1="306.3" x2="891.4" y2="765.7"/><line x1="993.3" y1="261.2" x2="993.3" y2="765.7"/><line x1="1103.2" y1="261.2" x2="1103.2" y2="765.7"/></svg></div></div><div class="t tl1" style="left:138px;top:267px;width:8px;text-align:center">1</div><div class="thumb" style="left:72px;top:304px;opacity:.5"><div class="tp"><div class="c tg" style="left:37.3px;top:44.4px;width:151.6px;height:31.9px"><span>Ô tô</span></div>
<div class="c nb" style="left:476.1px;top:44.4px;width:55.5px;height:31.9px"><span>3</span></div>
<div class="c nb" style="left:680.1px;top:44.4px;width:109.2px;height:31.9px"><span>2.315.000.000</span></div>
<div class="c nb" style="left:789.3px;top:44.4px;width:102.1px;height:31.9px"><span>1.500.000.000</span></div>
<div class="c nb" style="left:891.4px;top:44.4px;width:101.9px;height:31.9px"><span>815.000.000</span></div>
<div class="c nb" style="left:993.3px;top:44.4px;width:109.9px;height:31.9px"><span>1.120.500.000</span></div>
<div class="c tl" style="left:37.3px;top:76.3px;width:151.6px;height:32px"><span>Xe Toyota Camry</span></div>
<div class="c tm" style="left:188.9px;top:76.3px;width:60.6px;height:32px"><span>OTO01</span></div>
<div class="c tc" style="left:249.5px;top:76.3px;width:56.4px;height:32px"><span>2019</span></div>
<div class="c tm" style="left:305.9px;top:76.3px;width:113.4px;height:32px"><span>5 chỗ ngồi</span></div>
<div class="c n" style="left:476.1px;top:76.3px;width:55.5px;height:32px"><span>1</span></div>
<div class="c n" style="left:612px;top:76.3px;width:68.1px;height:32px"><span>75,00 %</span></div>
<div class="c n" style="left:680.1px;top:76.3px;width:109.2px;height:32px"><span>1.200.000.000</span></div>
<div class="c n" style="left:789.3px;top:76.3px;width:102.1px;height:32px"><span>1.200.000.000</span></div>
<div class="c n" style="left:993.3px;top:76.3px;width:109.9px;height:32px"><span>650.000.000</span></div>
<div class="c tl" style="left:37.3px;top:108.3px;width:151.6px;height:51.3px"><span>Xe Ford Transit 16 chỗ</span></div>
<div class="c tm" style="left:188.9px;top:108.3px;width:60.6px;height:51.3px"><span>OTO02</span></div>
<div class="c tc" style="left:249.5px;top:108.3px;width:56.4px;height:51.3px"><span>2020</span></div>
<div class="c tm" style="left:305.9px;top:108.3px;width:113.4px;height:51.3px"><span>16 chỗ ngồi,<br>tải trọng 1 tấn</span></div>
<div class="c n" style="left:476.1px;top:108.3px;width:55.5px;height:51.3px"><span>1</span></div>
<div class="c n" style="left:612px;top:108.3px;width:68.1px;height:51.3px"><span>80,00 %</span></div>
<div class="c n" style="left:680.1px;top:108.3px;width:109.2px;height:51.3px"><span>815.000.000</span></div>
<div class="c n" style="left:891.4px;top:108.3px;width:101.9px;height:51.3px"><span>815.000.000</span></div>
<div class="c n" style="left:993.3px;top:108.3px;width:109.9px;height:51.3px"><span>320.500.000</span></div>
<div class="c tl" style="left:37.3px;top:159.6px;width:151.6px;height:20.9px"><span>Xe cứu thương</span></div>
<div class="c tm" style="left:188.9px;top:159.6px;width:60.6px;height:20.9px"><span>OTO03</span></div>
<div class="c tc" style="left:249.5px;top:159.6px;width:56.4px;height:20.9px"><span>2021</span></div>
<div class="c tm" style="left:305.9px;top:159.6px;width:113.4px;height:20.9px"><span>7 chỗ ngồi</span></div>
<div class="c n" style="left:476.1px;top:159.6px;width:55.5px;height:20.9px"><span>1</span></div>
<div class="c n" style="left:612px;top:159.6px;width:68.1px;height:20.9px"><span>90,00 %</span></div>
<div class="c n" style="left:680.1px;top:159.6px;width:109.2px;height:20.9px"><span>300.000.000</span></div>
<div class="c n" style="left:789.3px;top:159.6px;width:102.1px;height:20.9px"><span>300.000.000</span></div>
<div class="c n" style="left:993.3px;top:159.6px;width:109.9px;height:20.9px"><span>150.000.000</span></div>
<div class="c tl" style="left:37.3px;top:180.5px;width:151.6px;height:34.5px"><span>Xe tải nhỏ</span></div>
<div class="c tm" style="left:188.9px;top:180.5px;width:60.6px;height:34.5px"><span>OTO04</span></div>
<div class="c tc" style="left:249.5px;top:180.5px;width:56.4px;height:34.5px"><span>2018</span></div>
<div class="c tm" style="left:305.9px;top:180.5px;width:113.4px;height:34.5px"><span>Tải trọng 2 tấn</span></div>
<div class="c n" style="left:476.1px;top:180.5px;width:55.5px;height:34.5px"><span>1</span></div>
<div class="c n" style="left:612px;top:180.5px;width:68.1px;height:34.5px"><span>60,00 %</span></div>
<div class="c n" style="left:680.1px;top:180.5px;width:109.2px;height:34.5px"><span>450.000.000</span></div>
<div class="c n" style="left:789.3px;top:180.5px;width:102.1px;height:34.5px"><span>300.000.000</span></div>
<div class="c n" style="left:891.4px;top:180.5px;width:101.9px;height:34.5px"><span>150.000.000</span></div>
<div class="c n" style="left:993.3px;top:180.5px;width:109.9px;height:34.5px"><span>250.000.000</span></div>
<div class="c tg" style="left:37.3px;top:215px;width:151.6px;height:23.7px"><span>Tài sản khác</span></div>
<div class="c nb" style="left:476.1px;top:215px;width:55.5px;height:23.7px"><span>4</span></div>
<div class="c nb" style="left:680.1px;top:215px;width:109.2px;height:23.7px"><span>986.500.000</span></div>
<div class="c nb" style="left:789.3px;top:215px;width:102.1px;height:23.7px"><span>986.500.000</span></div>
<div class="c nb" style="left:993.3px;top:215px;width:109.9px;height:23.7px"><span>612.300.000</span></div>
<div class="c tl" style="left:37.3px;top:238.7px;width:151.6px;height:32px"><span>Máy phát điện</span></div>
<div class="c tm" style="left:188.9px;top:238.7px;width:60.6px;height:32px"><span>MPD01</span></div>
<div class="c tc" style="left:249.5px;top:238.7px;width:56.4px;height:32px"><span>2020</span></div>
<div class="c n" style="left:476.1px;top:238.7px;width:55.5px;height:32px"><span>1</span></div>
<div class="c n" style="left:612px;top:238.7px;width:68.1px;height:32px"><span>70,00 %</span></div>
<div class="c n" style="left:680.1px;top:238.7px;width:109.2px;height:32px"><span>350.000.000</span></div>
<div class="c n" style="left:789.3px;top:238.7px;width:102.1px;height:32px"><span>350.000.000</span></div>
<div class="c n" style="left:993.3px;top:238.7px;width:109.9px;height:32px"><span>245.000.000</span></div>
<div class="c tl" style="left:37.3px;top:270.7px;width:151.6px;height:27.7px"><span>Máy chiếu</span></div>
<div class="c tm" style="left:188.9px;top:270.7px;width:60.6px;height:27.7px"><span>MC02</span></div>
<div class="c tc" style="left:249.5px;top:270.7px;width:56.4px;height:27.7px"><span>2021</span></div>
<div class="c n" style="left:476.1px;top:270.7px;width:55.5px;height:27.7px"><span>1</span></div>
<div class="c n" style="left:612px;top:270.7px;width:68.1px;height:27.7px"><span>85,00 %</span></div>
<div class="c n" style="left:680.1px;top:270.7px;width:109.2px;height:27.7px"><span>36.500.000</span></div>
<div class="c n" style="left:789.3px;top:270.7px;width:102.1px;height:27.7px"><span>36.500.000</span></div>
<div class="c n" style="left:993.3px;top:270.7px;width:109.9px;height:27.7px"><span>31.000.000</span></div>
<div class="c tl" style="left:37.3px;top:298.4px;width:151.6px;height:41.6px"><span>Hệ thống điều hòa trung tâm</span></div>
<div class="c tm" style="left:188.9px;top:298.4px;width:60.6px;height:41.6px"><span>DH01</span></div>
<div class="c tc" style="left:249.5px;top:298.4px;width:56.4px;height:41.6px"><span>2019</span></div>
<div class="c tm" style="left:305.9px;top:298.4px;width:113.4px;height:41.6px"><span>Công suất lớn,<br>đặc biệt</span></div>
<div class="c n" style="left:476.1px;top:298.4px;width:55.5px;height:41.6px"><span>1</span></div>
<div class="c n" style="left:612px;top:298.4px;width:68.1px;height:41.6px"><span>56,00 %</span></div>
<div class="c n" style="left:680.1px;top:298.4px;width:109.2px;height:41.6px"><span>600.000.000</span></div>
<div class="c n" style="left:789.3px;top:298.4px;width:102.1px;height:41.6px"><span>600.000.000</span></div>
<div class="c n" style="left:993.3px;top:298.4px;width:109.9px;height:41.6px"><span>336.300.000</span></div>
<div class="c h" style="left:37.3px;top:340px;width:151.6px;height:48.7px"><span>Tổng cộng</span></div>
<div class="c nb" style="left:476.1px;top:340px;width:55.5px;height:48.7px"><span>21</span></div>
<div class="c nb" style="left:680.1px;top:340px;width:109.2px;height:48.7px"><span>393.013.478.610</span></div>
<div class="c nb" style="left:789.3px;top:340px;width:102.1px;height:48.7px"><span>391.448.121.111</span></div>
<div class="c nb" style="left:891.4px;top:340px;width:101.9px;height:48.7px"><span>1.545.357.499</span></div>
<div class="c nb" style="left:993.3px;top:340px;width:109.9px;height:48.7px"><span>391.121.212.194</span></div>
<svg class="grid" width="1478" height="900" viewBox="0 0 1478 900" style="stroke-width:8.5"><line x1="33.05" y1="44.4" x2="1107.45" y2="44.4"/><line x1="33.05" y1="76.3" x2="1107.45" y2="76.3"/><line x1="33.05" y1="108.3" x2="1107.45" y2="108.3"/><line x1="33.05" y1="159.6" x2="1107.45" y2="159.6"/><line x1="33.05" y1="180.5" x2="1107.45" y2="180.5"/><line x1="33.05" y1="215" x2="1107.45" y2="215"/><line x1="33.05" y1="238.7" x2="1107.45" y2="238.7"/><line x1="33.05" y1="270.7" x2="1107.45" y2="270.7"/><line x1="33.05" y1="298.4" x2="1107.45" y2="298.4"/><line x1="33.05" y1="340" x2="1107.45" y2="340"/><line x1="33.05" y1="388.7" x2="1107.45" y2="388.7"/><line x1="37.3" y1="44.4" x2="37.3" y2="388.7"/><line x1="188.9" y1="44.4" x2="188.9" y2="388.7"/><line x1="249.5" y1="44.4" x2="249.5" y2="388.7"/><line x1="305.9" y1="44.4" x2="305.9" y2="388.7"/><line x1="419.3" y1="44.4" x2="419.3" y2="388.7"/><line x1="476.1" y1="44.4" x2="476.1" y2="388.7"/><line x1="532.4" y1="44.4" x2="532.4" y2="388.7"/><line x1="612" y1="44.4" x2="612" y2="388.7"/><line x1="680.1" y1="44.4" x2="680.1" y2="388.7"/><line x1="789.3" y1="44.4" x2="789.3" y2="388.7"/><line x1="891.4" y1="44.4" x2="891.4" y2="388.7"/><line x1="993.3" y1="44.4" x2="993.3" y2="388.7"/><line x1="1103.2" y1="44.4" x2="1103.2" y2="388.7"/></svg>
<div class="t" style="left:830px;top:402px;font-family:'Liberation Serif',serif;font-style:italic;font-size:13px;color:#000">Ngày ..... tháng ..... năm .......</div><div class="t" style="left:138px;top:430px;font-family:'Liberation Serif',serif;font-weight:bold;font-size:14px;color:#000">Người lập báo cáo</div><div class="t" style="left:486px;top:430px;font-family:'Liberation Serif',serif;font-weight:bold;font-size:14px;color:#000">Kế toán trưởng</div><div class="t" style="left:868px;top:430px;font-family:'Liberation Serif',serif;font-weight:bold;font-size:14px;color:#000">Thủ trưởng đơn vị</div><div class="t" style="left:560px;top:22px;font-family:'Liberation Serif',serif;font-size:12px;color:#000">2</div></div></div><div class="t tl1" style="left:138px;top:415px;width:8px;text-align:center">2</div>

<div id="dark"></div>
<!-- dark toolbar content -->
<svg class="abs" style="left:18px;top:98px" width="16" height="12" viewBox="0 0 16 12"><path d="M0 1h16M0 6h16M0 11h16" stroke="#fff" stroke-width="2"/></svg>
<div class="t" id="dtitle" style="left:60px;top:97px;font-size:14px;font-weight:bold;color:#fff;transform:scaleX(.917)">Biểu số 01A-ĐK_TSNN - Báo cáo tài sản nhà nước của đơn vị trực tiếp sử dụng</div>
<div class="abs" style="left:597px;top:94px;width:24px;height:20px;background:#191b1c"></div>
<div class="t" id="pgn" style="left:605px;top:98px;font-size:13px;color:#fff;-webkit-text-stroke:.35px #fff">1</div>
<div class="t" style="left:627px;top:96.800px;font-size:13px;color:#fff;-webkit-text-stroke:.35px #fff">/</div>
<div class="t" style="left:639px;top:96.800px;font-size:13px;color:#fff;-webkit-text-stroke:.35px #fff">2</div>
<div class="abs" style="left:670px;top:97px;width:1px;height:15px;background:#6a6d70"></div>
<div class="abs" style="left:687px;top:103px;width:12px;height:2px;background:#fff"></div>
<div class="abs" style="left:715px;top:94px;width:46px;height:20px;background:#191b1c"></div>
<div class="t" id="zm" style="left:722px;top:98px;font-size:13px;color:#fff;-webkit-text-stroke:.35px #fff;transform:scaleX(.97)">100%</div>
<div class="abs" style="left:777px;top:103px;width:12px;height:2px;background:#fff"></div>
<div class="abs" style="left:782px;top:98px;width:2px;height:12px;background:#fff"></div>
<div class="abs" style="left:805px;top:97px;width:1px;height:15px;background:#6a6d70"></div>
<!-- fit icon -->
<svg class="abs" style="left:826px;top:95px" width="20" height="18" viewBox="826 95 20 18"><rect x="827.650" y="96.950" width="16.700" height="14" rx="1.600" fill="none" stroke="#fff" stroke-width="1.700"/><path fill="#fff" d="M833.600 102.300h4.800L836 99zM833.600 106h4.800L836 109.300z"/></svg>
<!-- rotate icon -->
<svg class="abs" style="left:862.200px;top:94.200px" width="20" height="20" viewBox="0 0 24 24"><path fill="#fff" d="M7.340 6.410L.860 12.900l6.490 6.480 6.490-6.480-6.500-6.490zM3.690 12.900l3.660-3.660L11 12.900l-3.660 3.660-3.650-3.660zm15.670-6.260C17.610 4.880 15.300 4 13 4V.760L8.760 5 13 9.240V6c1.790 0 3.580.680 4.950 2.050 2.730 2.730 2.730 7.170 0 9.900C16.580 19.320 14.790 20 13 20c-.970 0-1.940-.210-2.840-.610l-1.490 1.490C10.020 21.620 11.510 22 13 22c2.300 0 4.610-.880 6.360-2.640 3.520-3.510 3.520-9.210 0-12.720z"/></svg>
<!-- download -->
<svg class="abs" style="left:1371px;top:93.800px" width="20" height="20" viewBox="0 0 24 24"><path fill="#fff" d="M19 9h-4V3H9v6H5l7 7 7-7zM5 18v2h14v-2H5z"/></svg>
<!-- print -->
<svg class="abs" style="left:1411px;top:93.800px" width="20" height="20" viewBox="0 0 24 24"><path fill="#fff" d="M19 8H5c-1.660 0-3 1.340-3 3v6h4v4h12v-4h4v-6c0-1.660-1.340-3-3-3zm-3 11H8v-5h8v5zm3-7c-.550 0-1-.450-1-1s.450-1 1-1 1 .450 1 1-.450 1-1 1zm-1-9H6v4h12V3z"/></svg>
<!-- more -->
<svg class="abs" style="left:1451px;top:94px" width="20" height="20" viewBox="0 0 24 24"><circle cx="12" cy="6" r="2" fill="#fff"/><circle cx="12" cy="12" r="2" fill="#fff"/><circle cx="12" cy="18" r="2" fill="#fff"/></svg>

<!-- title bar -->
<div id="titlebar"></div>
<svg class="abs" style="left:12px;top:12px" width="22" height="20" viewBox="12 12 22 20"><path d="M30 21.800H15.600M20.700 17.300L15.600 21.800l5.100 4.500" fill="none" stroke="#596180" stroke-width="1.900" stroke-linecap="round" stroke-linejoin="round"/></svg>
<div class="t" id="ttitle" style="left:47.800px;top:12px;font-size:18px;color:#111;-webkit-text-stroke:.2px #111;transform:scaleX(.980)">Biểu số 01A-ĐK_TSNN - Báo cáo tài sản nhà nước của đơn vị trực tiếp sử dụng</div>
<svg class="abs" style="left:1451px;top:14px" width="16" height="16" viewBox="0 0 16 16"><path d="M1 1l14 14M15 1L1 15" stroke="#555" stroke-width="1.500"/></svg>

<!-- toolbar 2 -->
<div id="tb2"></div>
<div class="btn" style="left:4px;width:122px"></div>
<div class="btn" style="left:134px;width:131px"></div>
<!-- printer icon -->
<svg class="abs" style="left:18px;top:48px" width="24" height="24" viewBox="18 48 24 24" fill="none" stroke="#4b4b4b" stroke-width="1.500" stroke-linecap="round" stroke-linejoin="round"><path d="M25.600 55v-1.400a1.900 1.900 0 0 1 1.900-1.900h4.900a1.900 1.900 0 0 1 1.900 1.900V55"/><path d="M25.300 65.200h-.6a3.100 3.100 0 0 1-3.100-3.100v-4a3.100 3.100 0 0 1 3.100-3.100h10.400a3.100 3.100 0 0 1 3.100 3.100v4a3.100 3.100 0 0 1-3.100 3.100h-.6"/><rect x="25.500" y="62.400" width="8.900" height="6.600" rx="2.200"/><path d="M33.200 58.400h2.200"/></svg>
<div class="t" id="taive" style="left:48.500px;top:52px;font-size:14.500px;color:#5060f0;transform:scaleX(.93)">Tải về</div>
<svg class="abs" style="left:100.500px;top:58px" width="10" height="6" viewBox="0 0 10 6"><path d="M1 .5h8L5 5z" fill="#4d5570"/></svg>
<!-- refresh icon -->
<svg class="abs" style="left:147px;top:48px" width="24" height="24" viewBox="147 48 24 24"><g fill="none" stroke="#454545" stroke-width="1.500"><path d="M153.300 55.800A7 7 0 0 1 166 60.400"/><path d="M164.700 64.400A7 7 0 0 1 152 59.600"/></g><path fill="#454545" d="M163.500 59.900h5L166 63.200zM149.500 60.100h5L152 56.800z"/></svg>
<div class="t" id="laylai" style="left:175.500px;top:53px;font-size:13px;color:#111;transform:scaleX(.914)">Lấy lại dữ liệu</div>
<svg class="abs" style="left:270px;top:48px" width="22" height="22" viewBox="270 48 22 22"><circle cx="280.900" cy="59.200" r="8.100" fill="#22a2c8"/><path d="M278.300 57A2.600 2.600 0 1 1 282.400 59.100C281.400 59.800 280.900 60.300 280.900 61.400V62" fill="none" stroke="#fff" stroke-width="1.500"/><rect x="280.100" y="63.300" width="1.600" height="1.700" fill="#fff"/></svg>
<div class="t" id="huongdan" style="left:298.600px;top:53px;font-size:15.300px;color:#25a3cb;transform:scaleX(.995)">Hướng dẫn đối chiếu</div>

<div id="frame"></div>
</body>
</html>
